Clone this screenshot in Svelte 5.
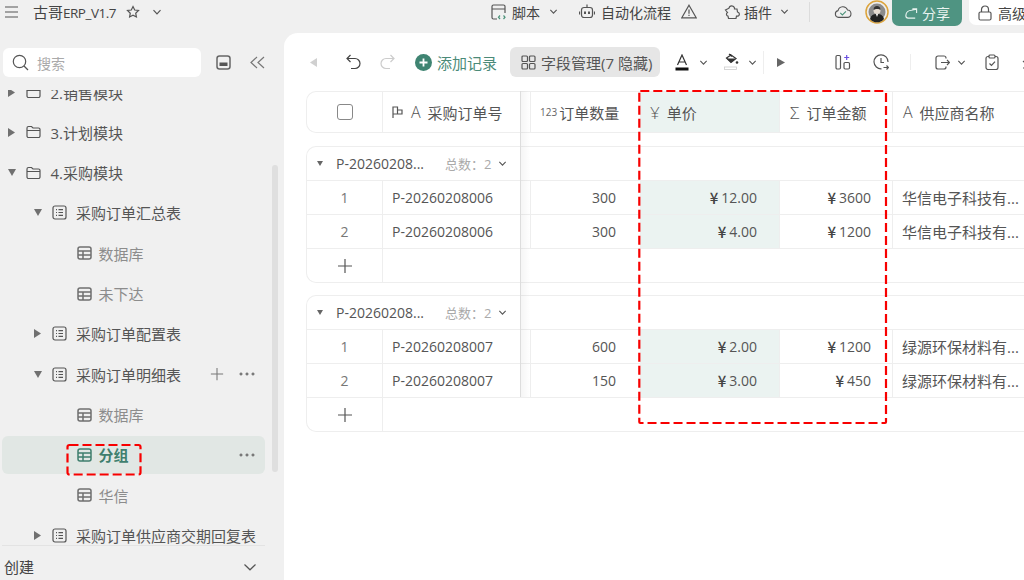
<script>
  const tree = [
    { level: 0, icon: 'folder', label: '2.销售模块', caret: 'right' },
    { level: 0, icon: 'folder', label: '3.计划模块', caret: 'right' },
    { level: 0, icon: 'folder', label: '4.采购模块', caret: 'down' },
    { level: 1, icon: 'list', label: '采购订单汇总表', caret: 'down' },
    { level: 2, icon: 'grid', label: '数据库' },
    { level: 2, icon: 'grid', label: '未下达' },
    { level: 1, icon: 'list', label: '采购订单配置表', caret: 'right' },
    { level: 1, icon: 'list', label: '采购订单明细表', caret: 'down', hover: true },
    { level: 2, icon: 'grid', label: '数据库' },
    { level: 2, icon: 'grid', label: '分组', active: true },
    { level: 2, icon: 'grid', label: '华信' },
    { level: 1, icon: 'list', label: '采购订单供应商交期回复表', caret: 'right' }
  ];

  const groups = [
    {
      rows: [
        { no: 'P-20260208006', qty: 300, price: '12.00', total: '3600', vendor: '华信电子科技有...' },
        { no: 'P-20260208006', qty: 300, price: '4.00', total: '1200', vendor: '华信电子科技有...' }
      ]
    },
    {
      rows: [
        { no: 'P-20260208007', qty: 600, price: '2.00', total: '1200', vendor: '绿源环保材料有...' },
        { no: 'P-20260208007', qty: 150, price: '3.00', total: '450', vendor: '绿源环保材料有...' }
      ]
    }
  ];
</script>

{#snippet chevron(size = 10)}
  <svg class="ic" width={size} height={size} viewBox="0 0 10 10"><path d="M1.500 3.200 5 6.800l3.500-3.600" /></svg>
{/snippet}

{#snippet plus(size = 16)}
  <svg class="ic" width={size} height={size} viewBox="0 0 16 16"><path d="M8 1v14M1 8h14" /></svg>
{/snippet}

{#snippet dots()}
  <svg class="dots" width="16" height="4" viewBox="0 0 16 4"><circle cx="2" cy="2" r="1.100" /><circle cx="8" cy="2" r="1.100" /><circle cx="14" cy="2" r="1.100" /></svg>
{/snippet}

{#snippet treeIcon(kind)}
  {#if kind === 'folder'}
    <svg class="ic" width="15" height="14" viewBox="0 0 15 14"><path d="M1 3a1.500 1.500 0 0 1 1.500-1.500h3L7 3h5.500A1.500 1.500 0 0 1 14 4.500v6.500a1.500 1.500 0 0 1-1.500 1.500h-10A1.500 1.500 0 0 1 1 11zM1 5.500h13" /></svg>
  {:else if kind === 'list'}
    <svg class="ic" width="15" height="15" viewBox="0 0 15 15"><rect x="1" y="1" width="13" height="13" rx="2" /><path d="M4 4.700h1M6.500 4.700h4.500M4 7.500h1M6.500 7.500h4.500M4 10.300h1M6.500 10.300h4.500" /></svg>
  {:else}
    <svg class="ic thick" width="15" height="14" viewBox="0 0 15 14"><rect x="1" y="1" width="13" height="12" rx="2" /><path d="M1 5h13M1 9h13M6 5v8" /></svg>
  {/if}
{/snippet}

<div class="app">
  <header class="topbar">
    <svg class="ic menu" width="13" height="12" viewBox="0 0 13 12"><path d="M0 1h13M0 6h13M0 11h13" /></svg>
    <span class="title">古哥<span class="title-latin">ERP_V1.7</span></span>
    <svg class="ic star" width="14" height="14" viewBox="0 0 14 14"><path d="m7 1.500 1.700 3.500 3.800.500-2.800 2.700.700 3.800L7 10.200l-3.400 1.800.700-3.800L1.500 5.500l3.800-.500z" /></svg>
    <span class="title-chev">{@render chevron(10)}</span>

    <div class="top-right">
      <div class="top-item script">
        <svg class="ic" width="15" height="16" viewBox="0 0 15 16"><path d="M6 15H2.500A1.500 1.500 0 0 1 1 13.500v-11A1.500 1.500 0 0 1 2.500 1h10A1.500 1.500 0 0 1 14 2.500V9M1 5h13" /><path class="green" d="m9 11.500-1.500 1.700L9 15M12.500 11.500l1.500 1.700-1.500 1.800" /></svg>
        <span>脚本</span>
        {@render chevron(9)}
      </div>
      <div class="top-item robot">
        <svg class="ic" width="16" height="15" viewBox="0 0 16 15"><rect x="2.500" y="3.500" width="11" height="10" rx="2.500" /><path d="M8 0.500v3M0.500 7.500v3M15.500 7.500v3" /><path class="heavy" d="M6 7.500v2.500M10 7.500v2.500" /></svg>
        <span>自动化流程</span>
        <svg class="ic warn" width="16" height="15" viewBox="0 0 16 15"><path d="M8 1.200 15.200 13.800H.800zM8 5.500v4.300M8 10.800v1.200" /></svg>
      </div>
      <div class="top-item plugin">
        <svg class="ic" width="16" height="16" viewBox="0 0 16 16"><path d="M5 4.200A2.800 2.800 0 0 1 10.500 4v1h2.500l.500 3a2.200 2.200 0 0 1 .500 4.200h-1.500l-.500 2.300H4.500L4 12.200A2 2 0 0 1 3.500 8.500L1.500 6z" /></svg>
        <span>插件</span>
        {@render chevron(9)}
      </div>
      <i class="top-divider"></i>
      <svg class="ic cloud" width="18" height="14" viewBox="0 0 20 15"><path d="M5 13.500a3.800 3.800 0 0 1-.500-7.500 5.500 5.500 0 0 1 10.500-.800 4.200 4.200 0 0 1 .500 8.300z" /><path class="green" d="m7 8.500 2.300 2.200 4-3.800" /></svg>
      <svg class="avatar" width="24" height="24" viewBox="0 0 24 24">
        <circle cx="12" cy="12" r="11" fill="#eee" stroke="#dca43c" stroke-width="1.500" />
        <circle cx="12" cy="12" r="8.500" fill="#8b8b8b" />
        <path d="M5 19c1-4 3.500-5 7-5s6 1 7 5a9 9 0 0 1-14 0z" fill="#222" />
        <path d="M10.800 14h2.400L12 17z" fill="#eee" />
        <circle cx="12" cy="10.500" r="3.500" fill="#e6dcd2" />
        <path d="M8.500 10c0-3 1.500-4 3.500-4s3.500 1 3.500 4c-1-1.500-5.500-1.500-7 0z" fill="#333" />
      </svg>
      <button class="share">
        <svg class="ic" width="14" height="13" viewBox="0 0 15 13"><path d="M9 1.500h4.500V6M13.200 2 8 3A6 6 0 0 0 2 8.500v.500a2.500 2.500 0 0 0 2.500 2.500H12" /></svg>
        分享
      </button>
      <div class="adv">
        <svg class="ic" width="14" height="16" viewBox="0 0 14 16"><rect x="1" y="7" width="12" height="8" rx="1.500" /><path d="M3.500 7V4.500a3.500 3.500 0 0 1 7 0V7" /></svg>
        <span>高级</span>
      </div>
    </div>
  </header>

  <div class="body">
    <aside class="sidebar">
      <div class="search-row">
        <div class="search">
          <svg class="ic" width="17" height="17" viewBox="0 0 17 17"><circle cx="7.500" cy="7.500" r="6.200" /><path d="m12 12 4 4" /></svg>
          <span>搜索</span>
        </div>
        <svg class="ic side-a" width="15" height="15" viewBox="0 0 15 15"><rect x="1" y="1" width="13" height="13" rx="2.500" /><rect class="fill" x="3.500" y="7.500" width="8" height="3.500" /></svg>
        <svg class="ic side-b" width="15" height="13" viewBox="0 0 15 13"><path d="M7 1 1 6.500 7 12M14 1 8 6.500l6 5.500" /></svg>
      </div>

      <nav class="tree">
        <div class="tree-inner">
          {#each tree as item}
            <div class="node n{item.level}" class:active={item.active} style="padding-left: {item.level * 26 + 6}px">
              <span class="caret">
                {#if item.caret === 'down'}
                  <svg width="8" height="7" viewBox="0 0 8 7"><path d="M0 0h8L4 7z" /></svg>
                {:else if item.caret === 'right'}
                  <svg width="7" height="9" viewBox="0 0 7 9"><path d="M0 0v9l7-4.500z" /></svg>
                {/if}
              </span>
              <span class="node-icon">{@render treeIcon(item.icon)}</span>
              <span class="label">{item.label}</span>
              {#if item.hover}
                <span class="node-actions">{@render plus(14)}{@render dots()}</span>
              {:else if item.active}
                <span class="node-actions">{@render dots()}</span>
              {/if}
            </div>
          {/each}
        </div>
        <div class="scrollbar"></div>
      </nav>

      <div class="create">
        <span>创建</span>
        <svg class="ic" width="14" height="14" viewBox="0 0 14 14"><path d="M1.500 4.500 7 9.800l5.500-5.300" /></svg>
      </div>
    </aside>

    <main class="main">
      <div class="toolbar">
        <svg class="back" width="7" height="9" viewBox="0 0 7 9"><path d="M7 0v9L0 4.500z" /></svg>
        <svg class="ic undo" width="15" height="16" viewBox="0 0 15 16"><path d="M4.500 1 1 4.500 4.500 8M1 4.500h8a5 5 0 0 1 0 10H5" /></svg>
        <svg class="ic redo" width="15" height="16" viewBox="0 0 15 16"><path d="M10.500 1 14 4.500 10.500 8M14 4.500H6a5 5 0 0 0 0 10h4" /></svg>
        <span class="add">
          <svg width="17" height="17" viewBox="0 0 17 17"><circle cx="8.500" cy="8.500" r="8.500" fill="#3f8472" /><path d="M8.500 4.500v8M4.500 8.500h8" stroke="#fff" stroke-width="1.800" /></svg>
          添加记录
        </span>
        <span class="fields">
          <svg class="ic" width="15" height="15" viewBox="0 0 15 15"><rect x="1" y="1" width="5.500" height="5.500" rx="1" /><rect x="8.500" y="1" width="5.500" height="5.500" rx="1" /><rect x="1" y="8.500" width="5.500" height="5.500" rx="1" /><rect x="8.500" y="8.500" width="5.500" height="5.500" rx="1" /></svg>
          字段管理(7 隐藏)
        </span>
        <span class="tool color">
          <svg width="14" height="17" viewBox="0 0 14 17"><path class="ic-line" d="M2.500 11 7 1l4.500 10M4 8h6" /><rect x="0.500" y="13.500" width="13" height="3" fill="#111" /></svg>
          {@render chevron(9)}
        </span>
        <span class="tool fill-tool">
          <svg width="15" height="18" viewBox="0 0 15 18"><path class="ic-line" d="M5 1 8 3.500M2.500 5 7 2l5 3.500-5 4z" /><path d="M2.500 5.500h9.500L7 9.500z" fill="#333" /><circle cx="13" cy="9.500" r="1.300" fill="#333" /><rect x="0.500" y="14" width="12" height="2.500" fill="#fff" stroke="#ccc" stroke-width="0.800" /></svg>
          {@render chevron(9)}
        </span>
        <i class="tool-divider"></i>
        <svg class="play" width="8" height="9" viewBox="0 0 8 9"><path d="M0 0v9l8-4.500z" /></svg>
        <svg class="ic t-apps" width="16" height="16" viewBox="0 0 16 16"><rect x="1" y="1.500" width="4.500" height="13.500" rx="1.200" /><rect x="9" y="8.500" width="5.500" height="6.500" rx="1.200" /><path class="violet" d="M11.700 1v5M9.200 3.500h5" /></svg>
        <svg class="ic t-clock" width="16" height="16" viewBox="0 0 16 16"><path d="M8.500 14.800A7 7 0 1 1 15 8M8 4v4.500h3M10.500 13.500h4.500M13.500 11.500l2 2-2 2" /></svg>
        <i class="tool-divider short"></i>
        <span class="tool export">
          <svg class="ic" width="15" height="15" viewBox="0 0 15 15"><path d="M11 3.500V3a2 2 0 0 0-2-2H3a2 2 0 0 0-2 2v9a2 2 0 0 0 2 2h6a2 2 0 0 0 2-2v-.500M6 7.500h8.500M12 5l2.500 2.500L12 10" /></svg>
          {@render chevron(9)}
        </span>
        <svg class="ic t-clip" width="14" height="16" viewBox="0 0 14 16"><rect x="1" y="2.500" width="12" height="13" rx="2" /><rect class="bgfill" x="4" y="1" width="6" height="3" rx="1" /><path d="m4.500 9.500 2 2 3.500-3.800" /></svg>
        <svg class="ic t-more" width="10" height="16" viewBox="0 0 10 16"><path d="M5 2v8M1 7l4 4 4-4M1 14h8" /></svg>
      </div>

      <div class="table">
        <div class="row head">
          <div class="cell check"><span class="box"></span></div>
          <div class="cell">
            <svg class="ic flag" width="11" height="12" viewBox="0 0 11 12"><path d="M1 12V1h4.500v7H1M5.500 4H10v4H5.500" /></svg>
            <span class="type-a">A</span>采购订单号
          </div>
          <div class="cell gap"></div>
          <div class="cell"><span class="type-num">123</span>订单数量</div>
          <div class="cell tinted"><span class="type-sym">¥</span>单价</div>
          <div class="cell sum"><span class="type-sym">Σ</span>订单金额</div>
          <div class="cell vendor-head"><span class="type-a">A</span>供应商名称</div>
        </div>

        {#each groups as group}
          <div class="group">
            <div class="group-head">
              <svg class="gcaret" width="6" height="5" viewBox="0 0 6 5"><path d="M0 0h6L3 5z" /></svg>
              <span class="gname">P-20260208...</span>
              <span class="gcount">总数：2</span>
              {@render chevron(9)}
            </div>
            {#each group.rows as r, i}
              <div class="row data">
                <div class="cell check latin">{i + 1}</div>
                <div class="cell latin">{r.no}</div>
                <div class="cell gap"></div>
                <div class="cell num latin">{r.qty}</div>
                <div class="cell num latin tinted price"><span class="yen">¥</span>{r.price}</div>
                <div class="cell num latin total"><span class="yen">¥</span>{r.total}</div>
                <div class="cell vendor">{r.vendor}</div>
              </div>
            {/each}
            <div class="row add-row">
              <div class="cell check">{@render plus(16)}</div>
              <div class="cell wide"></div>
            </div>
          </div>
        {/each}

        <div class="frozen"></div>
      </div>
    </main>
  </div>

  <svg class="marks" width="1024" height="580" viewBox="0 0 1024 580">
    <rect x="639.300" y="91" width="246.700" height="332" rx="1" />
    <rect x="67.500" y="445" width="73" height="29.500" rx="2" />
  </svg>
</div>

<style>
  :global(body) {
    margin: 0;
    background: #f0f0f0;
  }
  .app {
    position: relative;
    width: 1024px;
    height: 580px;
    overflow: hidden;
    display: flex;
    flex-direction: column;
    background: #f0f0f0;
    color: #555;
    font-family: "Open Sans", "Noto Sans CJK SC", sans-serif;
    font-size: 15px;
  }
  .ic {
    fill: none;
    stroke: #555;
    stroke-width: 1.2;
    flex: none;
    display: block;
  }
  .ic-line {
    fill: none;
    stroke: #333;
    stroke-width: 1.2;
  }
  .green {
    stroke: #4a9178;
  }
  .violet {
    stroke: #6a4fe0;
  }
  .heavy {
    stroke-width: 2;
  }
  .fill {
    fill: #555;
    stroke: none;
  }
  .dots {
    fill: #666;
    display: block;
  }

  /* top bar */
  .topbar {
    height: 33px;
    flex: none;
    display: flex;
    align-items: flex-start;
    padding-left: 5px;
  }
  .menu {
    margin-top: 6px;
  }
  .title {
    margin: 2px 0 0 15px;
    line-height: 20px;
    color: #444;
    width: 82px;
    white-space: nowrap;
  }
  .title-latin {
    font-size: 13.500px;
    letter-spacing: -0.500px;
  }
  .star {
    margin: 5px 0 0 11px;
  }
  .title-chev {
    margin: 7px 0 0 12px;
  }
  .top-right {
    display: flex;
    align-items: flex-start;
    margin-left: auto;
    width: 533px;
    flex: none;
    white-space: nowrap;
    font-size: 14px;
  }
  .top-item {
    display: flex;
    align-items: center;
    height: 23px;
    gap: 6px;
    color: #444;
    flex: none;
  }
  .script {
    width: 88px;
  }
  .script span {
    margin-right: 3px;
  }
  .robot {
    width: 145px;
  }
  .robot .warn {
    margin-left: 4px;
  }
  .plugin {
    width: 85px;
    gap: 4px;
  }
  .plugin span {
    margin-right: 4px;
  }
  .top-divider {
    width: 1px;
    height: 20px;
    background: #dcdcdc;
    margin: 2px 24px 0 0;
    flex: none;
  }
  .cloud {
    margin-top: 5px;
  }
  .avatar {
    margin: 0 3px 0 13px;
    flex: none;
  }
  .share {
    width: 70px;
    height: 26px;
    flex: none;
    border: none;
    background: #4f9482;
    color: #e9f3f0;
    border-radius: 0 0 7px 7px;
    display: flex;
    align-items: center;
    justify-content: center;
    gap: 4px;
    font: inherit;
    padding: 0;
  }
  .share .ic {
    stroke: #e9f3f0;
  }
  .adv {
    margin-left: 7px;
    flex: none;
    width: 55px;
    height: 25px;
    box-sizing: border-box;
    padding-left: 9px;
    background: #fff;
    border-radius: 0 0 0 7px;
    display: flex;
    align-items: center;
    gap: 6px;
    color: #444;
  }

  .body {
    flex: 1;
    display: flex;
    min-height: 0;
  }

  /* sidebar */
  .sidebar {
    width: 284px;
    flex: none;
    display: flex;
    flex-direction: column;
  }
  .search-row {
    height: 57px;
    flex: none;
    box-sizing: border-box;
    padding: 15px 0 0 3px;
    display: flex;
    align-items: flex-start;
  }
  .search {
    width: 198px;
    height: 29px;
    box-sizing: border-box;
    background: #fff;
    border-radius: 6px;
    padding-left: 9px;
    display: flex;
    align-items: center;
    gap: 8px;
    color: #aaa;
    font-size: 14px;
  }
  .side-a {
    margin: 7px 0 0 15px;
    stroke-width: 1.5;
    stroke: #666;
  }
  .side-b {
    margin: 8px 0 0 19px;
    stroke: #777;
  }
  .tree {
    position: relative;
    height: 455px;
    flex: none;
    border-bottom: 1px solid #e3e3e3;
    width: 263px;
    margin-left: 2px;
    clip-path: inset(0 -20px 0 0);
  }
  .tree-inner {
    margin-top: -17px;
  }
  .node {
    height: 38px;
    margin-bottom: 2.33px;
    display: flex;
    align-items: center;
    border-radius: 6px;
    box-sizing: border-box;
    white-space: nowrap;
    color: #555;
  }
  .node.active {
    background: #e1e7e4;
  }
  .caret {
    width: 18px;
    flex: none;
    display: flex;
    align-items: center;
  }
  .n1 .caret {
    width: 17.5px;
  }
  .n2 .caret {
    width: 17px;
  }
  .caret svg {
    fill: #707070;
    display: block;
  }
  .node-icon {
    width: 24.500px;
    flex: none;
  }
  .n2 .label {
    color: #8c8c8c;
    margin-left: -3px;
  }
  .node.active .label {
    color: #3f7f6e;
    font-weight: 700;
  }
  .node.active .ic {
    stroke: #3f7f6e;
  }
  .thick {
    stroke-width: 1.5;
    stroke: #6f6f6f;
  }
  .node-actions {
    margin-left: auto;
    margin-right: 10px;
    display: flex;
    align-items: center;
    gap: 15px;
  }
  .node-actions :global(svg) {
    stroke: #777;
  }
  .scrollbar {
    position: absolute;
    left: 270px;
    top: 75px;
    width: 6px;
    height: 307px;
    border-radius: 3px;
    background: #dfdfdf;
  }
  .create {
    flex: 1;
    width: 263px;
    box-sizing: border-box;
    display: flex;
    align-items: center;
    justify-content: space-between;
    padding: 7px 6px 0 4px;
    color: #444;
  }

  /* main */
  .main {
    flex: 1;
    min-width: 0;
    background: #fff;
    border-radius: 14px 0 0 0;
    overflow: hidden;
  }
  .toolbar {
    box-sizing: border-box;
    height: 44px;
    margin-bottom: 14px;
    padding: 14px 0 0 26px;
    display: flex;
    align-items: center;
    white-space: nowrap;
  }
  .back {
    fill: #d0d0d0;
    flex: none;
  }
  .undo {
    margin-left: 29px;
    stroke: #444;
  }
  .redo {
    margin-left: 19px;
    stroke: #ccc;
  }
  .add {
    margin-left: 20px;
    display: flex;
    align-items: center;
    gap: 5px;
    color: #4b8a78;
  }
  .add svg {
    flex: none;
  }
  .fields {
    margin-left: 13px;
    height: 30px;
    width: 150px;
    flex: none;
    box-sizing: border-box;
    padding-left: 11px;
    background: #e6e6e6;
    border-radius: 6px;
    display: flex;
    align-items: center;
    gap: 5px;
    color: #555;
  }
  .tool {
    display: flex;
    align-items: center;
    flex: none;
  }
  .color {
    margin-left: 15px;
    gap: 10px;
  }
  .fill-tool {
    margin-left: 16px;
    gap: 9px;
  }
  .tool-divider {
    width: 1px;
    height: 23px;
    background: #eee;
    margin-left: 6px;
    flex: none;
  }
  .tool-divider.short {
    height: 16px;
    margin-left: 21px;
  }
  .play {
    fill: #666;
    margin-left: 13px;
    flex: none;
  }
  .t-apps {
    margin-left: 50px;
  }
  .t-clock {
    margin-left: 22px;
  }
  .export {
    margin-left: 24px;
    gap: 7px;
  }
  .t-clip {
    margin-left: 19px;
  }
  .bgfill {
    fill: #fff;
  }
  .t-more {
    margin-left: 23px;
  }

  /* table */
  .table {
    position: relative;
    margin-left: 22px;
    width: 800px;
    color: #555;
  }
  .row {
    display: grid;
    box-sizing: border-box;
  }
  .cell {
    display: flex;
    align-items: center;
    box-sizing: border-box;
    padding-left: 9px;
    border-left: 1px solid #eee;
    white-space: nowrap;
    min-width: 0;
  }
  .cell:first-child {
    border-left: none;
  }
  .latin {
    font-size: 14px;
    color: #555;
  }
  .head {
    height: 42px;
    border: 1px solid #eee;
    border-right: none;
    border-radius: 10px 0 0 10px;
    margin-bottom: 13px;
    grid-template-columns: 75px 139px 9px 110px 139px 113px 1fr;
  }
  .check {
    justify-content: center;
    padding: 0;
    color: #777;
  }
  .box {
    width: 14px;
    height: 14px;
    border: 1.300px solid #888;
    border-radius: 3px;
  }
  .gap {
    padding: 0;
    border-left: none;
  }
  .flag {
    margin-right: 8px;
  }
  .type-a {
    margin-right: 7px;
    font-size: 16px;
    font-weight: 300;
    color: #555;
  }
  .type-num {
    font-size: 10px;
    margin-right: 2px;
    color: #666;
  }
  .type-sym {
    margin-right: 7px;
    color: #555;
    font-size: 17px;
    font-weight: 300;
    line-height: 1;
  }
  .sum {
    padding-left: 10px;
  }
  .vendor-head {
    padding-left: 10px;
  }
  .tinted {
    background: #ebf3f1;
  }
  .group {
    border: 1px solid #eee;
    border-right: none;
    border-radius: 10px 0 0 10px;
    margin-bottom: 12px;
  }
  .group-head {
    height: 33px;
    display: flex;
    align-items: center;
    padding-left: 10px;
    border-bottom: 1px solid #eee;
  }
  .gcaret {
    fill: #666;
    flex: none;
  }
  .gname {
    margin-left: 13px;
    width: 109px;
    white-space: nowrap;
    font-size: 14px;
  }
  .gcount {
    color: #aaa;
    font-size: 13px;
    width: 53px;
    white-space: nowrap;
  }
  .data {
    height: 34px;
    border-bottom: 1px solid #eee;
    grid-template-columns: 75px 139px 9px 110px 139px 113px 1fr;
  }
  .num {
    justify-content: flex-end;
    padding: 0 24px 0 0;
  }
  .price {
    padding-right: 22px;
  }
  .total {
    padding-right: 21px;
  }
  .yen {
    font-family: "Noto Sans CJK SC", sans-serif;
    font-size: 15px;
    font-weight: 500;
    margin-right: 3px;
    color: #444;
  }
  .vendor {
    font-size: 15px;
  }
  .add-row {
    height: 33px;
    grid-template-columns: 75px 1fr;
  }
  .frozen {
    position: absolute;
    left: 214px;
    top: 0;
    height: 306px;
    width: 9px;
    border-left: 1px solid #ddd;
    background: linear-gradient(to right, rgba(0, 0, 0, 0.04), rgba(0, 0, 0, 0));
  }

  .marks {
    position: absolute;
    left: 0;
    top: 0;
    pointer-events: none;
  }
  .marks rect {
    fill: none;
    stroke: #f80000;
    stroke-width: 2.2;
    stroke-dasharray: 9 4;
  }
</style>
